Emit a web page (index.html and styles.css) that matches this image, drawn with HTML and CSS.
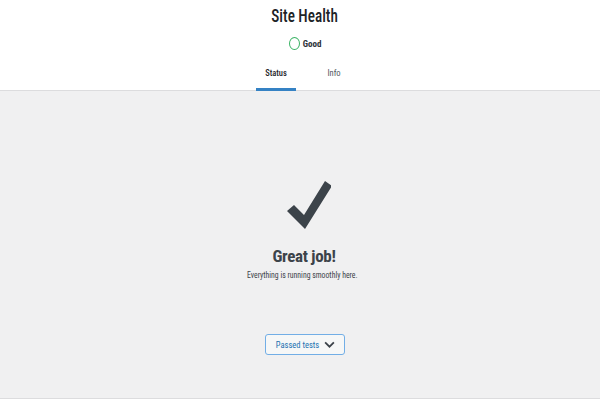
FILE: index.html
```html
<!DOCTYPE html>
<html>
<head>
<meta charset="utf-8">
<link rel="stylesheet" href="styles.css">
</head>
<body>
<header class="header">
  <h1 class="title">Site Health</h1>
  <div class="rating">
    <span class="rating-ring"></span>
    <span class="rating-label">Good</span>
  </div>
  <nav class="tabs">
    <a class="tab tab-active">Status</a>
    <a class="tab">Info</a>
  </nav>
</header>
<main class="main">
  <svg class="check" viewBox="0 0 44 48" width="44" height="48">
    <path d="M0 30 L7 24 L17 34 L38 0 L45 5 L18 48 Z" fill="#3c434a"/>
  </svg>
  <h2 class="great">Great job!</h2>
  <p class="sub">Everything is running smoothly here.</p>
  <button class="passed">Passed tests
    <svg class="chev" viewBox="0 0 12 8" width="11" height="7"><path d="M1 1.5 L6 6.5 L11 1.5" fill="none" stroke="#3c434a" stroke-width="2"/></svg>
  </button>
</main>
<div class="foot"></div>
</body>
</html>
```
FILE: styles.css
```css
html, body { margin: 0; padding: 0; background: #fff; }
body { font-family: "Roboto Condensed", Roboto, "Liberation Sans", sans-serif; color: #1d2327; }
.header {
  height: 90px;
  border-bottom: 1px solid #dcdcde;
  display: flex; flex-direction: column; align-items: center;
  background: #fff;
}
.title { margin: 4px 0 0 10px; font-size: 19px; font-weight: 500; line-height: 24px; transform: scaleX(0.8); }
.rating { display: flex; align-items: center; gap: 3px; margin-top: 9px; margin-left: 10px; }
.rating-ring { width: 9px; height: 11px; border: 1.5px solid #3bb365; border-radius: 50%; }
.rating-label { font-size: 9px; font-weight: 700; color: #2c3338; }
.tabs { display: flex; margin-top: 17px; margin-left: 10px; }
.tab { display: block; width: 40px; text-align: center; font-size: 8.5px; line-height: 12px; color: #50575e; padding-bottom: 9px; border-bottom: 3px solid transparent; margin: 0 9px; }
.tab-active { font-weight: 500; color: #1d2327; border-bottom-color: #3582c4; }
.main {
  height: 307px; background: #f0f0f1; border-bottom: 1px solid #dcdcde;
  display: flex; flex-direction: column; align-items: center;
}
.check { margin-top: 90px; margin-left: 17px; }
.great { margin: 17px 0 0 8px; font-size: 17px; font-weight: 700; line-height: 20px; letter-spacing: -0.3px; color: #3c434a; }
.sub { margin: 3px 0 0 4px; font-size: 9px; line-height: 12px; color: #3c434a; transform: scaleX(0.86); }
.passed {
  margin-top: 53px; margin-left: 9px; height: 21px; width: 80px;
  border: 1px solid #72aee6; border-radius: 3px; background: #f6f7f7;
  color: #2271b1; font-family: inherit; font-size: 8.5px;
  display: flex; align-items: center; justify-content: center; gap: 5px; padding: 0 0 0 2px;
}
.chev { display: block; }
.foot { height: 1px; }
```
